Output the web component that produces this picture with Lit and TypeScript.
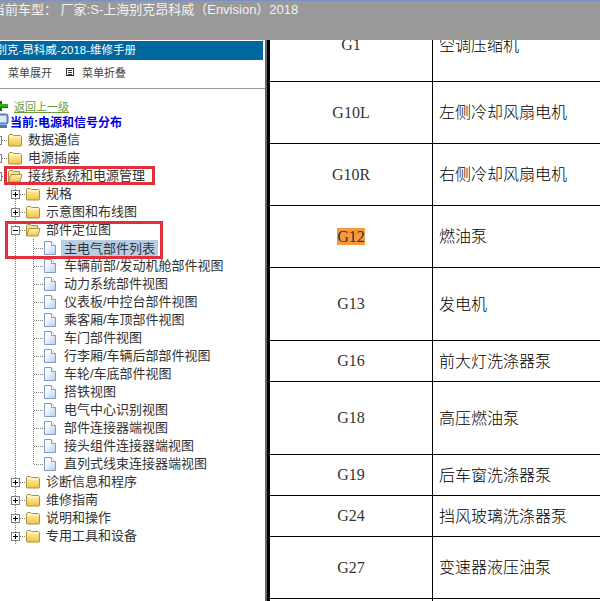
import { LitElement, css, html, svg } from 'lit'
import { customElement } from 'lit/decorators.js'

type Row = { code: string; name: string; h: number; hot?: boolean }
type Node = { label: string; kind: 'closed' | 'open' | 'doc'; guides: string[]; sel?: boolean }

const rows: Row[] = [
  { code: 'G1', name: '空调压缩机', h: 73 },
  { code: 'G10L', name: '左侧冷却风扇电机', h: 62 },
  { code: 'G10R', name: '右侧冷却风扇电机', h: 62 },
  { code: 'G12', name: '燃油泵', h: 62, hot: true },
  { code: 'G13', name: '发电机', h: 73 },
  { code: 'G16', name: '前大灯洗涤器泵', h: 41 },
  { code: 'G18', name: '高压燃油泵', h: 73 },
  { code: 'G19', name: '后车窗洗涤器泵', h: 41 },
  { code: 'G24', name: '挡风玻璃洗涤器泵', h: 41 },
  { code: 'G27', name: '变速器液压油泵', h: 62 },
  { code: '', name: '', h: 62 },
]

const leaves = [
  '车辆前部/发动机舱部件视图', '动力系统部件视图', '仪表板/中控台部件视图', '乘客厢/车顶部件视图',
  '车门部件视图', '行李厢/车辆后部部件视图', '车轮/车底部件视图', '搭铁视图', '电气中心识别视图',
  '部件连接器端视图', '接头组件连接器端视图',
]

const nodes: Node[] = [
  { label: '数据通信', kind: 'closed', guides: ['plus'] },
  { label: '电源插座', kind: 'closed', guides: ['plus'] },
  { label: '接线系统和电源管理', kind: 'open', guides: ['minus'] },
  { label: '规格', kind: 'closed', guides: ['v', 'plus'] },
  { label: '示意图和布线图', kind: 'closed', guides: ['v', 'plus'] },
  { label: '部件定位图', kind: 'open', guides: ['v', 'minus'] },
  { label: '主电气部件列表', kind: 'doc', guides: ['v', 'v', 'tee'], sel: true },
  ...leaves.map((label): Node => ({ label, kind: 'doc', guides: ['v', 'v', 'tee'] })),
  { label: '直列式线束连接器端视图', kind: 'doc', guides: ['v', 'v', 'end'] },
  { label: '诊断信息和程序', kind: 'closed', guides: ['v', 'plus'] },
  { label: '维修指南', kind: 'closed', guides: ['v', 'plus'] },
  { label: '说明和操作', kind: 'closed', guides: ['v', 'plus'] },
  { label: '专用工具和设备', kind: 'closed', guides: ['v', 'plus'] },
]

function guide(kind: string) {
  const v = svg`<line x1="8.5" y1="0" x2="8.5" y2="18" stroke="#808080" stroke-dasharray="1 1" />`
  const half = svg`<line x1="8.5" y1="0" x2="8.5" y2="9" stroke="#808080" stroke-dasharray="1 1" />`
  const h = svg`<line x1="9" y1="9.5" x2="18" y2="9.5" stroke="#808080" stroke-dasharray="1 1" />`
  const box = svg`<rect x="4.5" y="5.5" width="8" height="8" fill="#fff" stroke="#808080" />
    <line x1="6" y1="9.5" x2="11" y2="9.5" stroke="#000" />`
  const plus = svg`<line x1="8.5" y1="7" x2="8.5" y2="12" stroke="#000" />`
  return html`<svg class="guide" width="18" height="18" viewBox="0 0 18 18">
    ${kind === 'v' || kind === 'tee' || kind === 'plus' || kind === 'minus' ? v : ''}
    ${kind === 'end' ? half : ''}
    ${kind !== 'v' ? h : ''}
    ${kind === 'plus' || kind === 'minus' ? box : ''}
    ${kind === 'plus' ? plus : ''}
  </svg>`
}

function icon(kind: Node['kind']) {
  if (kind === 'doc') {
    return html`<svg class="icon doc" width="14" height="16" viewBox="0 0 14 16">
      <defs><linearGradient id="d" x1="0" y1="0" x2="1" y2="1">
        <stop offset="0.25" stop-color="#fff" /><stop offset="1" stop-color="#b4cdf0" />
      </linearGradient></defs>
      <path d="M1.5 1.5h7l4 4v9h-11z" fill="url(#d)" stroke="#7f9cc6" />
      <path d="M8.5 1.5v4h4" fill="#fff" stroke="#7f9cc6" />
    </svg>`
  }
  return html`<svg class="icon" width="16" height="14" viewBox="0 0 16 14">
    <defs><linearGradient id="f" x1="0" y1="0" x2="0" y2="1">
      <stop offset="0" stop-color="#fff6bd" /><stop offset="1" stop-color="#f4c23f" />
    </linearGradient></defs>
    ${kind === 'open'
      ? svg`<path d="M1.5 12V2.5l1-1h3l1 1h6v3" fill="#f8e08a" stroke="#a89148" />
          <path d="M1.5 13l2.5-7.5h11l-2 7.5z" fill="url(#f)" stroke="#a89148" />`
      : svg`<path d="M1.5 12.5v-10l1-1h3l1 1h7l1 1v9l-.5.5H2z" fill="url(#f)" stroke="#a89148" />
          <path d="M2.5 4h11" stroke="#fff8d0" />`}
  </svg>`
}

@customElement('app-root')
export class AppRoot extends LitElement {
  render() {
    return html`
      <header class="top"><span>当前车型： 厂家:S-上海别克昂科威（Envision）2018</span></header>
      <div class="body">
        <aside class="side">
          <div class="title"><span>别克-昂科威-2018-维修手册</span></div>
          <div class="tools">
            <span class="tool"><i class="ti"></i>菜单展开</span>
            <span class="tool"><i class="ti"></i>菜单折叠</span>
          </div>
          <div class="back">
            <svg width="12" height="10" viewBox="0 0 12 10">
              <path d="M3 0h2v10H3z" fill="#1d6f0b" />
              <path d="M3 3h8v3H3z" fill="#2fae12" />
              <path d="M3 6h8v1H3z" fill="#1d6f0b" />
            </svg>
            <a>返回上一级</a>
          </div>
          <div class="cur">
            <svg width="13" height="16" viewBox="0 0 13 16">
              <rect x="1" y="1" width="11" height="10" rx="2" fill="#8fabe0" stroke="#3a62ad" />
              <rect x="3" y="3" width="7" height="6" fill="#dfe9f8" />
              <path d="M2 12h9v3H2z" fill="#4b76bd" />
            </svg>
            <b>当前:电源和信号分布</b>
          </div>
          <div class="tree">
            ${nodes.map(n => html`
              <div class="node">
                ${n.guides.map(g => guide(g))}
                ${icon(n.kind)}
                <span class=${n.sel ? 'label sel' : 'label'}>${n.label}</span>
              </div>
            `)}
          </div>
          <div class="mark one"></div>
          <div class="mark two"></div>
        </aside>
        <div class="split"></div>
        <main class="main">
          <div class="table">
            ${rows.map(r => html`
              <div class="row" style="height:${r.h}px">
                <div class="code"><span class=${r.hot ? 'hot' : ''}>${r.code}</span></div>
                <div class="name">${r.name}</div>
              </div>
            `)}
          </div>
        </main>
      </div>
    `
  }

  static styles = css`
    :host {
      display: block;
      width: 600px;
      height: 601px;
      overflow: hidden;
      background: #fff;
      font-family: "Liberation Sans", "Noto Sans CJK SC", sans-serif;
    }
    .top {
      height: 40px;
      box-sizing: border-box;
      border-top: 1px solid #7f8fc4;
      background: #999;
      color: #f2f2f2;
      font-size: 13px;
      line-height: 18px;
      white-space: nowrap;
      overflow: hidden;
    }
    .top span { display: block; margin-left: -8px; }
    .body { display: flex; height: 561px; }
    .side {
      position: relative;
      width: 265px;
      flex: none;
      overflow: hidden;
      padding-top: 1px;
      box-sizing: border-box;
    }
    .title {
      width: 263px;
      height: 19px;
      background: #00689f;
      color: #fff;
      font-size: 11.5px;
      line-height: 19px;
      white-space: nowrap;
      overflow: hidden;
    }
    .title span { display: block; margin-left: -4.5px; }
    .tools {
      display: flex;
      height: 23px;
      padding-bottom: 5px;
      align-items: center;
      border-bottom: 1px solid #999;
      color: #444;
      font-size: 11px;
      margin-left: -8px;
      gap: 14px;
    }
    .tool { display: flex; align-items: center; gap: 8px; }
    .ti {
      display: block;
      width: 8px;
      height: 8px;
      padding: 0 1px;
      border: 1px solid #333;
      background: repeating-linear-gradient(#fff 0 1px, #333 1px 2px) content-box;
      box-sizing: border-box;
    }
    .back {
      display: flex;
      align-items: center;
      height: 18px;
      margin: 8px 0 0 -3px;
      gap: 5px;
    }
    .back a {
      color: #6a9a3a;
      font-size: 11px;
      text-decoration: underline;
    }
    .cur {
      display: flex;
      align-items: center;
      height: 16px;
      margin: -2px 0 0 -4px;
      gap: 1px;
      color: #0000dd;
      font-size: 12px;
    }
    .tree { margin: 2px 0 0 -11px; }
    .node {
      display: flex;
      align-items: center;
      height: 18px;
      white-space: nowrap;
    }
    .guide { flex: none; display: block; }
    .icon { flex: none; display: block; }
    .doc { margin-right: 4px; }
    .label {
      color: #333;
      font-size: 13px;
      line-height: 17px;
      margin-left: 2px;
      padding: 0 3px;
      position: relative;
      top: -1px;
    }
    .doc + .label { margin-left: 0; }
    .sel { background: #b8cce4; top: 0; }
    .mark {
      position: absolute;
      box-sizing: border-box;
      border: 3px solid #e0303c;
    }
    .mark.one { left: 4px; top: 126px; width: 151px; height: 19px; }
    .mark.two { left: 5px; top: 181px; width: 158px; height: 38px; }
    .split {
      flex: none;
      width: 2px;
      background: #666;
    }
    .main {
      flex: 1;
      min-width: 0;
      overflow: hidden;
      border-left: 3px solid #000;
    }
    .table { margin-top: -31px; }
    .row {
      display: grid;
      grid-template-columns: 163px 1fr;
      box-sizing: border-box;
      border-bottom: 1px solid #000;
    }
    .code {
      display: flex;
      align-items: center;
      justify-content: center;
      border-right: 1px solid #000;
      color: #333;
      font-family: "Liberation Serif", serif;
      font-size: 16px;
    }
    .hot { background: #f7993a; line-height: 17px; }
    .name {
      display: flex;
      align-items: center;
      padding: 0 0 3px 6px;
      color: #000;
      font-size: 16px;
      font-weight: 300;
      white-space: nowrap;
    }
  `
}
